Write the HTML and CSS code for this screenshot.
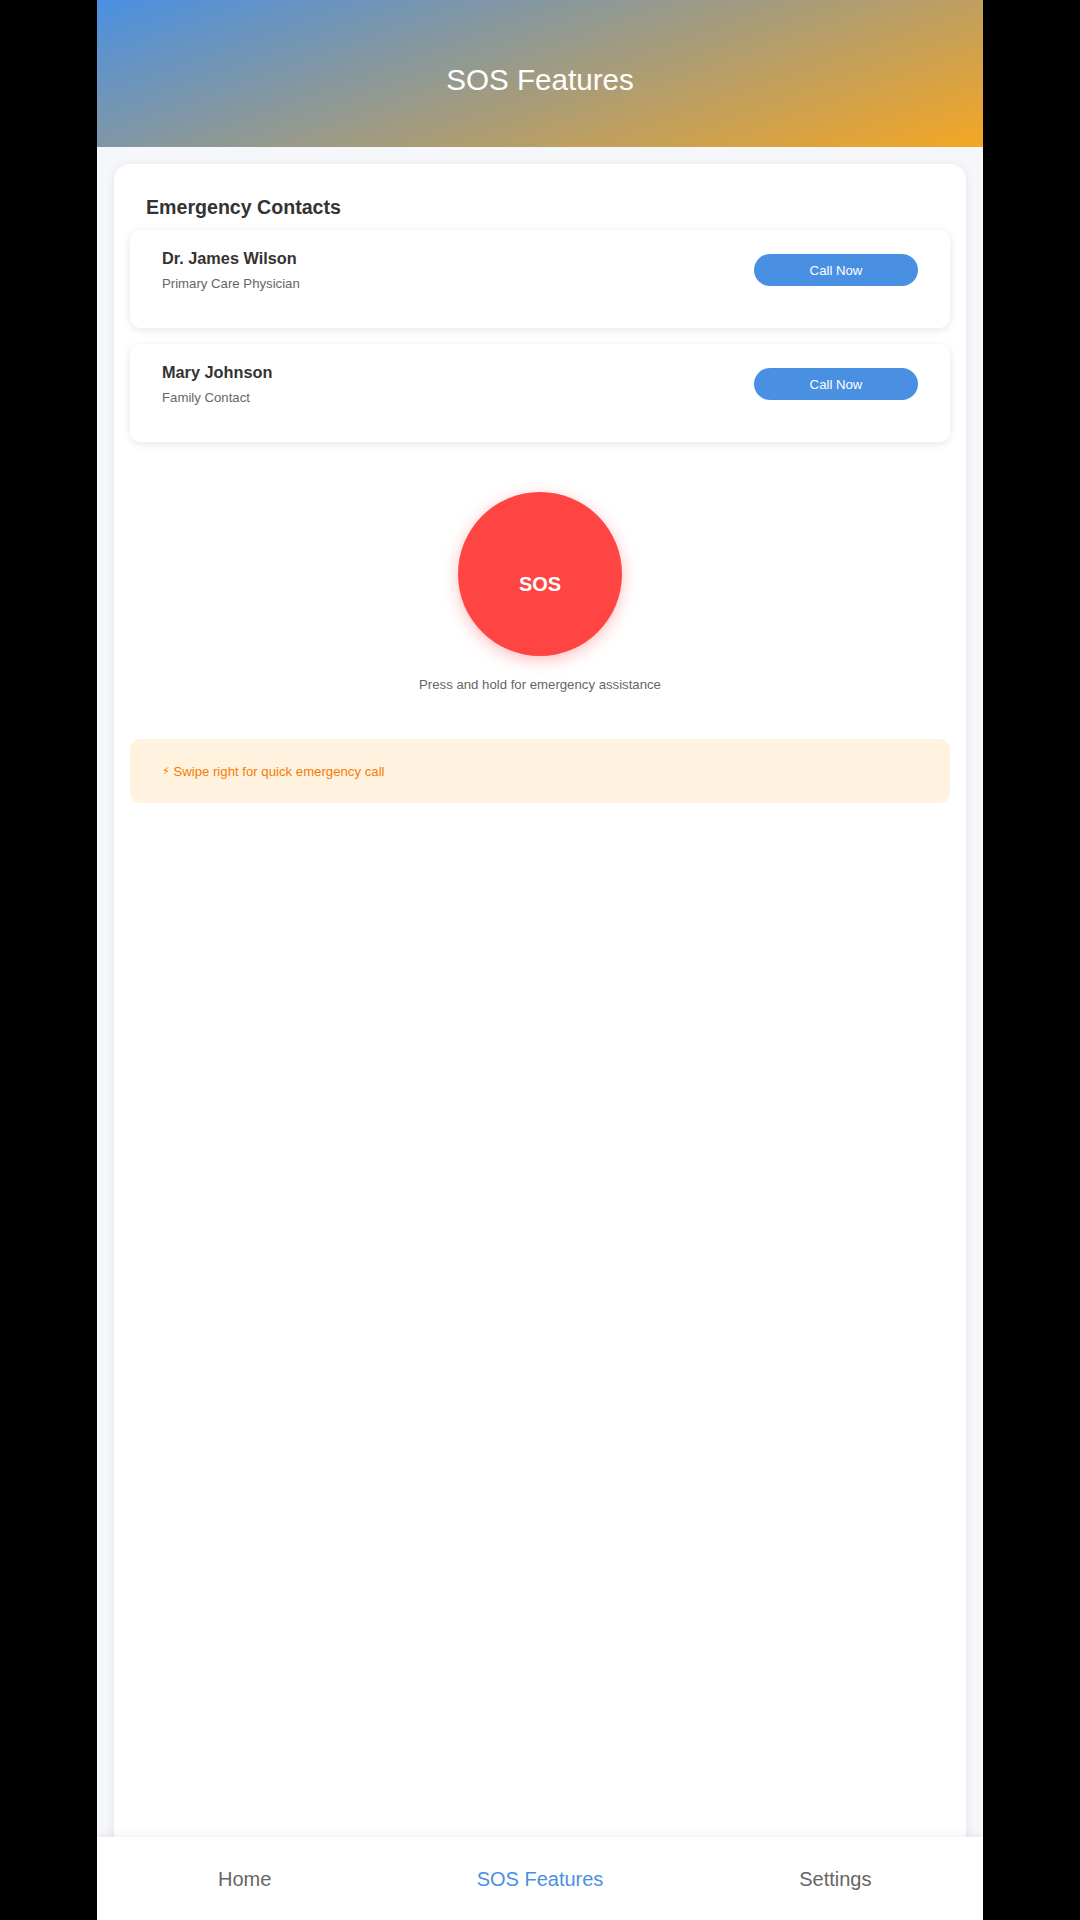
FILE: index.html
```html
<!DOCTYPE html>
<html lang="en">
<head>
<meta charset="utf-8">
<title>SOS Features</title>
<link rel="stylesheet" href="styles.css">
</head>
<body>
<div class="app">
  <header class="header">
    <h1 class="header-title">SOS Features</h1>
  </header>
  <main class="main">
    <section class="card">
      <h2 class="section-title">Emergency Contacts</h2>
      <div class="contact">
        <div class="contact-info">
          <div class="contact-name">Dr. James Wilson</div>
          <div class="contact-role">Primary Care Physician</div>
        </div>
        <button class="call-btn">Call Now</button>
      </div>
      <div class="contact">
        <div class="contact-info">
          <div class="contact-name">Mary Johnson</div>
          <div class="contact-role">Family Contact</div>
        </div>
        <button class="call-btn">Call Now</button>
      </div>
      <div class="sos-section">
        <button class="sos-btn">SOS</button>
        <p class="sos-hint">Press and hold for emergency assistance</p>
      </div>
      <div class="tip"><span class="bolt">⚡</span> Swipe right for quick emergency call</div>
    </section>
  </main>
  <nav class="nav">
    <div class="nav-item">Home</div>
    <div class="nav-item active">SOS Features</div>
    <div class="nav-item">Settings</div>
  </nav>
</div>
</body>
</html>
```
FILE: styles.css
```css
* { box-sizing: border-box; }
html, body {
  margin: 0;
  padding: 0;
  background: #000;
  font-family: "Liberation Sans", Arial, sans-serif;
}
.app {
  position: relative;
  width: 886px;
  height: 1920px;
  margin: 0 auto;
  background: #f5f7fa;
  overflow: hidden;
  display: flex;
  flex-direction: column;
}
.header {
  height: 147px;
  flex: none;
  display: flex;
  align-items: center;
  justify-content: center;
  padding-top: 13px;
  background: linear-gradient(160deg, #4a90e2 0%, #f5a623 100%);
}
.header-title {
  margin: 0;
  color: #fff;
  font-size: 29.6px;
  font-weight: normal;
  line-height: 34px;
}
.main {
  flex: 1;
  padding: 17px 17px 0;
}
.card {
  background: #fff;
  border-radius: 16px;
  box-shadow: 0 2px 12px rgba(0, 0, 0, 0.08);
  padding: 16px 16px 0;
  min-height: 1800px;
}
.section-title {
  margin: 15px 16px 11px;
  font-size: 19.6px;
  line-height: 24px;
  font-weight: bold;
  color: #333;
}
.contact {
  display: flex;
  align-items: center;
  justify-content: space-between;
  background: #fff;
  border-radius: 10px;
  box-shadow: 0 2px 8px rgba(0, 0, 0, 0.1);
  padding: 18px 32px 36px;
  margin-bottom: 16px;
}
.contact-name {
  font-size: 16.3px;
  line-height: 20px;
  font-weight: bold;
  color: #333;
}
.contact-role {
  margin-top: 8px;
  font-size: 13.2px;
  line-height: 16px;
  color: #666;
}
.call-btn {
  width: 164px;
  height: 32px;
  border: none;
  border-radius: 16px;
  background: #4a90e2;
  color: #fff;
  font-family: "Liberation Sans", Arial, sans-serif;
  font-size: 13.2px;
  margin-top: 0;
}
.sos-section {
  display: flex;
  flex-direction: column;
  align-items: center;
  padding-top: 34px;
}
.sos-btn {
  width: 164px;
  height: 164px;
  border: none;
  border-radius: 50%;
  background: #ff4444;
  color: #fff;
  font-family: "Liberation Sans", Arial, sans-serif;
  font-size: 20px;
  font-weight: bold;
  padding: 20px 0 0;
  box-shadow: 0 4px 16px rgba(255, 68, 68, 0.35);
}
.sos-hint {
  margin: 21px 0 0;
  font-size: 13.2px;
  line-height: 16px;
  color: #666;
}
.tip {
  margin-top: 46px;
  height: 64px;
  display: flex;
  align-items: center;
  padding: 0 32px;
  background: #fff3e0;
  border-radius: 10px;
  color: #f57c00;
  font-size: 13.2px;
  white-space: pre;
}
.bolt {
  font-family: "DejaVu Sans", sans-serif;
  font-size: 11px;
}
.nav {
  position: absolute;
  left: 0;
  right: 0;
  bottom: 0;
  height: 83px;
  display: flex;
  align-items: center;
  padding-top: 2px;
  background: #fff;
  box-shadow: 0 -2px 8px rgba(0, 0, 0, 0.06);
}
.nav-item {
  flex: 1;
  text-align: center;
  font-size: 20px;
  color: #666;
}
.nav-item.active {
  color: #4a90e2;
}
```
